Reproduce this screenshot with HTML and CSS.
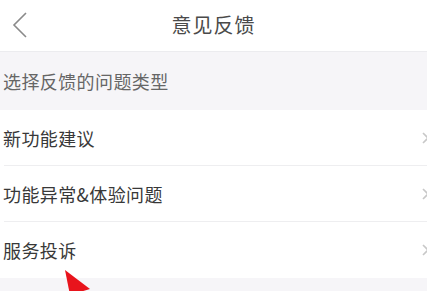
FILE: index.html
```html
<!DOCTYPE html>
<html lang="zh">
<head>
<meta charset="utf-8">
<link rel="stylesheet" href="styles.css">
</head>
<body>
<div class="page">
  <header class="topbar">
    <svg class="back" width="20" height="28" viewBox="0 0 20 28"><path d="M16 2 L4 14 L16 26" fill="none" stroke="#8a8a8a" stroke-width="1.6"/></svg>
    <div class="title">意见反馈</div>
  </header>
  <div class="section">选择反馈的问题类型</div>
  <ul class="list">
    <li class="row"><span>新功能建议</span><svg class="chev" width="8" height="12" viewBox="0 0 8 12"><path d="M1 1 L6 6 L1 11" fill="none" stroke="#c8c8c8" stroke-width="1.6"/></svg></li>
    <li class="row"><span>功能异常&amp;体验问题</span><svg class="chev" width="8" height="12" viewBox="0 0 8 12"><path d="M1 1 L6 6 L1 11" fill="none" stroke="#c8c8c8" stroke-width="1.6"/></svg></li>
    <li class="row"><span>服务投诉</span><svg class="chev" width="8" height="12" viewBox="0 0 8 12"><path d="M1 1 L6 6 L1 11" fill="none" stroke="#c8c8c8" stroke-width="1.6"/></svg></li>
  </ul>
  <div class="footer"></div>
  <svg class="arrow" width="60" height="36" viewBox="0 0 60 36"><polygon points="25,15 30,40 50,34" fill="#e8141c"/></svg>
</div>
</body>
</html>
```
FILE: styles.css
```css
* { box-sizing: border-box; }
html, body { margin: 0; padding: 0; }
body {
  width: 427px;
  height: 291px;
  overflow: hidden;
  background: #f6f5f8;
  font-family: "Noto Sans CJK SC", "Noto Sans", sans-serif;
}
.page { position: relative; width: 427px; height: 291px; overflow: hidden; }
.topbar {
  height: 52px;
  background: #ffffff;
  border-bottom: 1px solid #ececef;
  display: flex;
  align-items: center;
  justify-content: center;
  position: relative;
}
.back { position: absolute; left: 10px; top: 11px; }
.title {
  font-size: 20px;
  color: #4a4a4a;
  letter-spacing: 1px;
  margin-top: -2px;
}
.section {
  height: 58px;
  display: flex;
  align-items: center;
  padding-left: 3px;
  font-size: 18px;
  color: #666;
  letter-spacing: 0.4px;
}
.list {
  list-style: none;
  margin: 0;
  padding: 0 0 0 4px;
  background: #fff;
}
.row {
  height: 56px;
  display: flex;
  align-items: center;
  justify-content: space-between;
  border-bottom: 1px solid #eeeef0;
  font-size: 18px;
  color: #383838;
  letter-spacing: 0.4px;
}
.row span { margin-left: -1px; }
.row:last-child { border-bottom: none; }
.chev { margin-right: -3px; }
.footer { height: 13px; }
.arrow { position: absolute; left: 40px; top: 255px; }
```
